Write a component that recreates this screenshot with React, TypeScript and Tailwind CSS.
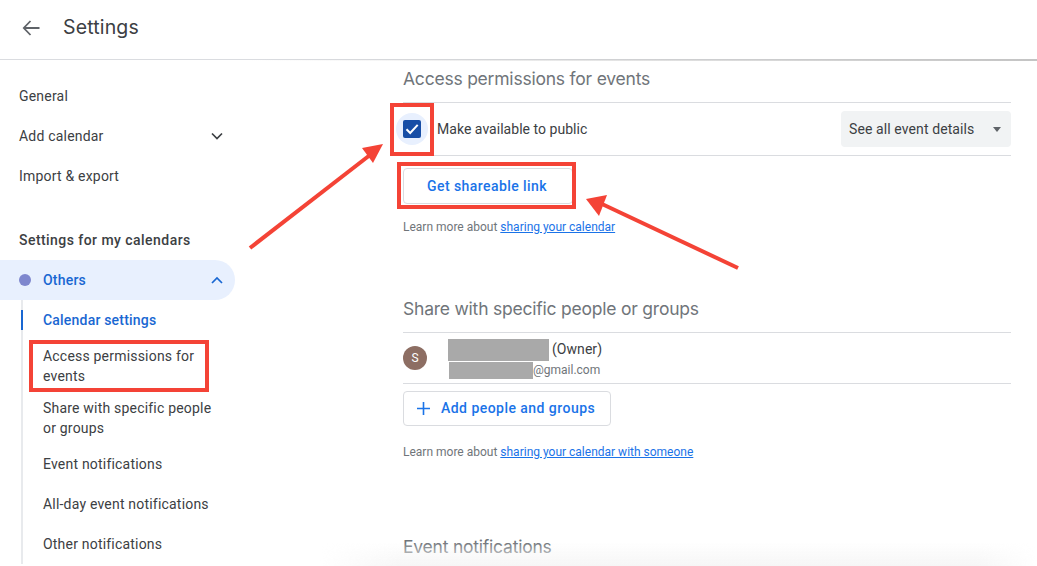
import React from "react";

const roboto = "font-['Roboto','Liberation_Sans',sans-serif]";
const heading = "font-['Inter','Roboto',sans-serif]";

function NavItem({ children, className = "" }: { children: React.ReactNode; className?: string }) {
  return <div className={`flex items-center h-10 pl-[19px] text-[14px] tracking-[0.2px] text-[#3c4043] ${className}`}>{children}</div>;
}

function SubItem({ children, tall = false, active = false }: { children: React.ReactNode; tall?: boolean; active?: boolean }) {
  return (
    <div className={`flex items-center pl-[20px] ${tall ? "h-[52px]" : "h-10"} text-[14px] leading-5 tracking-[0.2px] ${active ? "text-[#1967d2] font-medium" : "text-[#3c4043]"}`}>
      {children}
    </div>
  );
}

function Chevron({ up = false, color = "#3c4043" }: { up?: boolean; color?: string }) {
  return (
    <svg width="12" height="8" viewBox="0 0 12 8" fill="none">
      <path d={up ? "M1 7L6 2L11 7" : "M1 1.5L6 6.5L11 1.5"} stroke={color} strokeWidth="1.7" />
    </svg>
  );
}

function SectionTitle({ children, className = "" }: { children: React.ReactNode; className?: string }) {
  return <h2 className={`${heading} text-[17.5px] leading-6 tracking-[-0.22px] font-normal text-[#70757a] ${className}`}>{children}</h2>;
}

function LearnMore({ link }: { link: string }) {
  return (
    <p className="text-[12px] leading-4 text-[#70757a]">
      Learn more about <span className="text-[#1a73e8] underline">{link}</span>
    </p>
  );
}

export default function App() {
  return (
    <div className={`${roboto} relative w-[1037px] h-[566px] overflow-hidden bg-white flex flex-col`}>
      <header className="h-[60px] shrink-0 flex items-center pb-1 border-b border-[#dadce0]">
        <svg className="ml-[22px]" width="18" height="16" viewBox="0 0 18 16" fill="none">
          <path d="M17.5 8H2M8.5 1L1.8 8L8.5 15" stroke="#5f6368" strokeWidth="1.8" />
        </svg>
        <h1 className={`${heading} ml-[23px] text-[19.5px] tracking-[0.15px] font-normal text-[#3c4043]`}>Settings</h1>
      </header>

      <div className="flex flex-1 min-h-0">
        <aside className="w-[403px] shrink-0 pt-4">
          <NavItem>General</NavItem>
          <NavItem className="w-[235px] justify-between pr-[12px]">
            <span>Add calendar</span>
            <Chevron />
          </NavItem>
          <NavItem>Import &amp; export</NavItem>
          <div className="pl-[19px] mt-[34px] mb-[10px] h-5 flex items-center text-[14px] font-medium tracking-[0.45px] text-[#3c4043]">Settings for my calendars</div>
          <div className="h-10 w-[235px] rounded-r-[20px] bg-[#e8f0fe] flex items-center pl-[19px] pr-[12px] text-[14px] font-medium tracking-[0.2px] text-[#1967d2]">
            <span className="w-3 h-3 rounded-full bg-[#7e87ce]" />
            <span className="ml-3 flex-1">Others</span>
            <Chevron up color="#1967d2" />
          </div>
          <div className="ml-[21px] w-[200px] border-l-2 border-[#e8eaed] relative">
            <div className="absolute -left-[2px] top-[10px] w-[2px] h-5 bg-[#1967d2]" />
            <SubItem active>Calendar settings</SubItem>
            <SubItem tall>Access permissions for<br />events</SubItem>
            <SubItem tall>Share with specific people<br />or groups</SubItem>
            <SubItem>Event notifications</SubItem>
            <SubItem>All-day event notifications</SubItem>
            <SubItem>Other notifications</SubItem>
          </div>
        </aside>

        <main className="w-[608px] pt-[7px]">
          <SectionTitle className="pb-[11px] border-b border-[#dadce0]">Access permissions for events</SectionTitle>
          <div className="h-[53px] flex items-center justify-between border-b border-[#dadce0]">
            <div className="flex items-center">
              <span className="relative flex items-center justify-center w-[18px] h-[18px] rounded-[2px] bg-[#174ea6]">
                <span className="absolute -left-[7px] -top-[7px] w-8 h-8 rounded-full bg-[#e8f0fe]" />
                <span className="absolute inset-0 rounded-[2px] bg-[#174ea6]" />
                <svg className="relative" width="14" height="12" viewBox="0 0 14 12" fill="none">
                  <path d="M1.5 6.2L5.2 10L12.7 1.8" stroke="#fff" strokeWidth="2" />
                </svg>
              </span>
              <span className="ml-4 text-[14px] tracking-[0.03px] text-[#3c4043]">Make available to public</span>
            </div>
            <div className="h-9 w-[170px] rounded bg-[#f1f3f4] flex items-center justify-between pl-2 pr-[10px] text-[14px] tracking-[0.1px] text-[#3c4043]">
              <span>See all event details</span>
              <span className="w-0 h-0 border-x-[4.5px] border-x-transparent border-t-[5px] border-t-[#5f6368]" />
            </div>
          </div>
          <button className="mt-3 block h-9 w-[170px] pr-[2px] rounded border border-[#dadce0] bg-white text-[14px] font-medium tracking-[0.42px] text-[#1a73e8]">
            Get shareable link
          </button>
          <div className="mt-[15px]"><LearnMore link="sharing your calendar" /></div>

          <SectionTitle className="mt-[62px] pb-[11px] border-b border-[#dadce0]">Share with specific people or groups</SectionTitle>
          <div className="h-[51px] flex items-center border-b border-[#dadce0]">
            <span className="w-6 h-6 rounded-full bg-[#8d6e63] flex items-center justify-center text-[12px] text-white">S</span>
            <div className="ml-[21px] flex flex-col">
              <div className="flex items-center h-[24px] text-[14px] tracking-[0.05px] text-[#3c4043]">
                <span className="block w-[101px] h-[22px] bg-[#a9a9a9]" />
                <span className="ml-[3px]">(Owner)</span>
              </div>
              <div className="flex items-center h-[17px] text-[12px] text-[#70757a]">
                <span className="block ml-[1px] w-[84px] h-[17px] bg-[#a9a9a9]" />
                <span>@gmail.com</span>
              </div>
            </div>
          </div>
          <button className="mt-[7px] h-[35px] w-[208px] rounded border border-[#dadce0] bg-white flex items-center pl-[13px] text-[14px] font-medium tracking-[0.46px] text-[#1a73e8]">
            <svg width="13" height="13" viewBox="0 0 13 13" fill="none"><path d="M6.5 0V13M0 6.5H13" stroke="#1a73e8" strokeWidth="1.6" /></svg>
            <span className="ml-[11px]">Add people and groups</span>
          </button>
          <div className="mt-[18px]"><LearnMore link="sharing your calendar with someone" /></div>

          <SectionTitle className="mt-[75px] tracking-[-0.1px]">Event notifications</SectionTitle>
        </main>
      </div>

      {/* top-edge shadow and bottom fade of the scrolling pane */}
      <div className="absolute left-[250px] right-0 top-[59px] h-[2px] bg-gradient-to-r from-transparent to-[#c4c4c4]" />
      <div className="absolute left-[320px] right-0 bottom-0 h-6 bg-gradient-to-b from-transparent to-[#f6f6f6] [mask-image:linear-gradient(to_right,transparent,black_80px,black_calc(100%-60px),transparent)]" />

      {/* annotations */}
      <div className="absolute left-[29px] top-[340px] w-[180px] h-[52px] border-[4px] border-[#f44336]" />
      <div className="absolute left-[390px] top-[103px] w-[44px] h-[53px] border-[4px] border-[#f44336]" />
      <div className="absolute left-[397px] top-[162px] w-[179px] h-[47px] border-[4px] border-[#f44336]" />
      <svg className="absolute inset-0 pointer-events-none" width="1037" height="566" viewBox="0 0 1037 566" fill="none">
        <path d="M250 248L370 155" stroke="#f44336" strokeWidth="4" />
        <path d="M383 144L362 148L373 163Z" fill="#f44336" />
        <path d="M738 268L602 204" stroke="#f44336" strokeWidth="4" />
        <path d="M586 199L607 195L599 216Z" fill="#f44336" />
      </svg>
    </div>
  );
}
